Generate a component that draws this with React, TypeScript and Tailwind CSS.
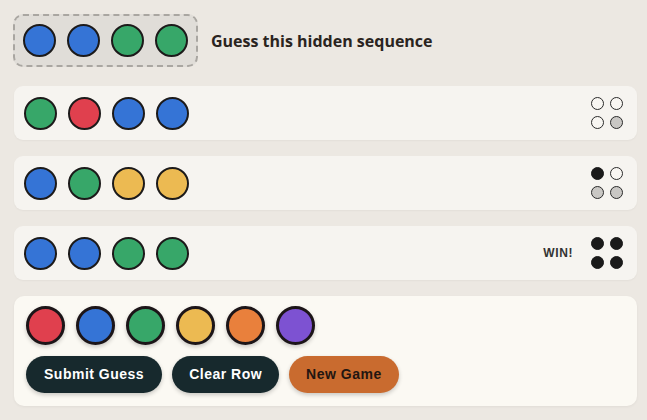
import React from 'react';

type Color = 'red' | 'blue' | 'green' | 'yellow' | 'orange' | 'purple';

const fill: Record<Color, string> = {
  red: 'bg-[#e0404e]',
  blue: 'bg-[#3574d6]',
  green: 'bg-[#37a769]',
  yellow: 'bg-[#ecba52]',
  orange: 'bg-[#e9803c]',
  purple: 'bg-[#7d52d2]',
};

type Peg = 'black' | 'white' | 'empty';

const pegClass: Record<Peg, string> = {
  black: 'bg-[#1a1a1a] border-[#1a1a1a]',
  white: 'bg-[#c9c7c4] border-[#2a2a2a]',
  empty: 'bg-[#f8f6f2] border-[#2a2a2a]',
};

const rows: { guess: Color[]; pegs: Peg[]; win?: boolean }[] = [
  { guess: ['green', 'red', 'blue', 'blue'], pegs: ['empty', 'empty', 'empty', 'white'] },
  { guess: ['blue', 'green', 'yellow', 'yellow'], pegs: ['black', 'empty', 'white', 'white'] },
  { guess: ['blue', 'blue', 'green', 'green'], pegs: ['black', 'black', 'black', 'black'], win: true },
];

const palette: Color[] = ['red', 'blue', 'green', 'yellow', 'orange', 'purple'];

const Dot = ({ c }: { c: Color }) => (
  <div className={`w-[33px] h-[33px] rounded-full border-2 border-[#1c1a1a] ${fill[c]}`} />
);

export default function App() {
  return (
    <div
      className="min-h-screen bg-[#ece8e2] px-[14px] pt-[14px] text-[#2a2420]"
      style={{ fontFamily: '"Open Sans", "Noto Sans", sans-serif' }}
    >
      <div className="flex items-center gap-[13px] mb-[19px]">
        <div className="flex gap-[11px] rounded-[10px] border-2 border-dashed border-[#a9a6a1] bg-[#e0ddd8] px-[8px] py-[8px] -ml-px">
          {(['blue', 'blue', 'green', 'green'] as Color[]).map((c, i) => (
            <Dot key={i} c={c} />
          ))}
        </div>
        <span className="text-[16px] font-bold">Guess this hidden sequence</span>
      </div>

      <div className="flex flex-col gap-[16px] w-[623px]">
        {rows.map((r, i) => (
          <div
            key={i}
            className="flex items-center justify-between h-[54px] rounded-[9px] bg-[#f6f4f0] pl-[10px] pr-[14px] shadow-[0_1px_2px_rgba(0,0,0,0.04)]"
          >
            <div className="flex gap-[11px]">
              {r.guess.map((c, j) => (
                <Dot key={j} c={c} />
              ))}
            </div>
            <div className="flex items-center gap-[18px]">
              {r.win && (
                <span
                  className="text-[12px] font-bold tracking-[0.6px] text-[#333]"
                  style={{ fontFamily: '"Liberation Sans", Arial, sans-serif' }}
                >
                  WIN!
                </span>
              )}
              <div className="grid grid-cols-2 gap-[6px]">
                {r.pegs.map((p, j) => (
                  <div key={j} className={`w-[13px] h-[13px] rounded-full border ${pegClass[p]}`} />
                ))}
              </div>
            </div>
          </div>
        ))}

        <div className="rounded-[10px] bg-[#fbf9f3] px-[12px] pt-[10px] pb-[13px] shadow-[0_1px_3px_rgba(0,0,0,0.05)]">
          <div className="flex gap-[11px]">
            {palette.map((c) => (
              <div
                key={c}
                className={`w-[39px] h-[39px] rounded-full border-[3px] border-[#1c1518] shadow-[0_2px_4px_rgba(0,0,0,0.2)] ${fill[c]}`}
              />
            ))}
          </div>
          <div
            className="flex gap-[10px] mt-[11px]"
            style={{ fontFamily: '"Liberation Sans", Arial, sans-serif' }}
          >
            <button className="h-[37px] px-[18px] rounded-full bg-[#17292d] text-white text-[14px] font-bold tracking-[0.5px] shadow-[0_2px_4px_rgba(0,0,0,0.2)]">
              Submit Guess
            </button>
            <button className="h-[37px] px-[17px] rounded-full bg-[#17292d] text-white text-[14px] font-bold tracking-[0.5px] shadow-[0_2px_4px_rgba(0,0,0,0.2)]">
              Clear Row
            </button>
            <button className="h-[37px] px-[17px] rounded-full bg-[#c96b2f] text-[#231611] text-[14px] font-bold tracking-[0.5px] shadow-[0_2px_4px_rgba(0,0,0,0.2)]">
              New Game
            </button>
          </div>
        </div>
      </div>
    </div>
  );
}
